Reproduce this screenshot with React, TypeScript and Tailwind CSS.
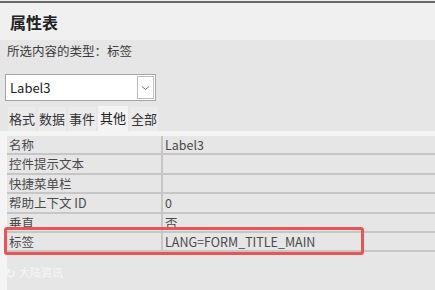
const font = "font-['Microsoft_YaHei','Noto_Sans_CJK_SC',sans-serif]"

const rows: [string, string][] = [
  ["名称", "Label3"],
  ["控件提示文本", ""],
  ["快捷菜单栏", ""],
  ["帮助上下文 ID", "0"],
  ["垂直", "否"],
  ["标签", "LANG=FORM_TITLE_MAIN"],
]

const tabs = ["格式", "数据", "事件", "其他", "全部"]

export default function App() {
  return (
    <div
      className={`relative w-[435px] h-[290px] overflow-hidden bg-[#e6e6e6] text-[#333] flex flex-col ${font}`}
    >
      <div className="h-px bg-[#eeeeee]" />
      <div className="h-[2px] bg-[#686868]" />
      <div className="h-[37px] bg-[#f0f0f0] pl-[10px] flex items-center">
        <span className="text-[16px] font-bold text-[#222] leading-none">属性表</span>
      </div>

      <div className="pl-[7px] pt-[3px] text-[12.5px] leading-[16px] text-[#3a3a3a]">
        所选内容的类型：标签
      </div>

      <div className="mt-[15px] ml-[5px] w-[151px] h-[27px] bg-white border border-[#a5a5a5] flex items-center">
        <span className="pl-[4px] text-[13px] text-[#222] flex-1">Label3</span>
        <div className="mr-[1px] w-[17px] h-[23px] border border-[#bdbdbd] bg-white flex items-center justify-center">
          <svg width="9" height="6" viewBox="0 0 9 6">
            <path d="M1 1.5 L4.5 4.5 L8 1.5" fill="none" stroke="#777" strokeWidth="1" />
          </svg>
        </div>
      </div>

      <div className="mt-[5px] ml-[8px] flex gap-[2px] h-[25px] items-end">
        {tabs.map((t) => (
          <div
            key={t}
            className={
              t === "其他"
                ? "h-[25px] px-[2px] pb-[2px] bg-[#f4f4f4] text-[13px] text-[#222] flex items-center"
                : "h-[24px] px-[1px] bg-[#ebebeb] text-[13px] text-[#333] flex items-center"
            }
          >
            {t}
          </div>
        ))}
      </div>

      <div className="flex-1 flex flex-col bg-[#f4f4f4] pl-[7px] pt-[5px]">
        <div className="flex-1 bg-[#e6e6e6] relative">
          {rows.map(([k, v]) => (
            <div
              key={k}
              className="grid grid-cols-[156px_1fr] h-[19.4px] border-b-2 border-[#c6c6c6] text-[12.5px] leading-[17px]"
            >
              <div className="pl-[2px] border-r-2 border-[#c6c6c6] text-[#4a4a4a] whitespace-nowrap overflow-hidden">
                {k}
              </div>
              <div className="pl-[2px] text-[#4a4a4a] whitespace-nowrap">{v}</div>
            </div>
          ))}

          <div className="mt-[12px] ml-[-2px] flex items-center gap-[3px] text-[11px] text-[#f6f6f6]">
            <span className="text-[13px] leading-none">↻</span>
            <span>大陆资讯</span>
          </div>
        </div>
      </div>

      <div className="absolute left-[4px] top-[227px] w-[360px] h-[28px] border-[3px] border-[#ea5454] rounded-[3px]" />
    </div>
  )
}
